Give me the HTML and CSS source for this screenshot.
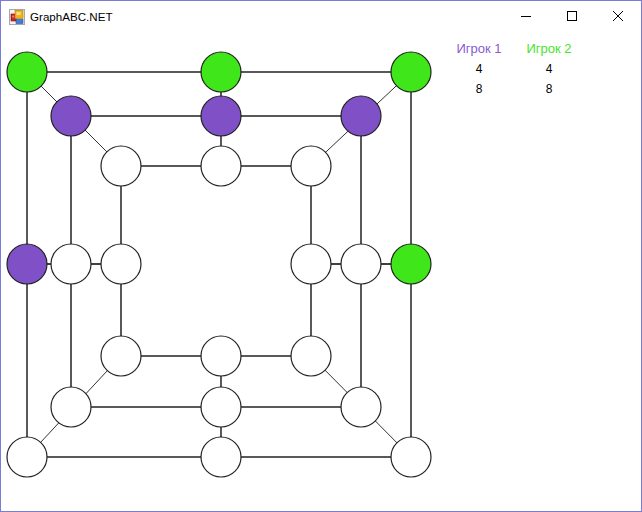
FILE: index.html
```html
<!DOCTYPE html>
<html lang="ru">
<head>
    <meta charset="UTF-8">
    <title>GraphABC.NET</title>
    <link rel="stylesheet" href="styles.css">
</head>
<body>
    <div class="window">
        <div class="titlebar">
            <svg class="app-icon" width="16" height="16" viewBox="0 0 16 16">
                <rect x="0.5" y="0.5" width="15" height="15" fill="#f4f4f4" stroke="#a8a8a8"/>
                <rect x="2" y="5" width="5" height="7" fill="#c8282a" stroke="#7a1010" stroke-width="0.6"/>
                <rect x="3.2" y="6.5" width="2" height="2" fill="#f08080"/>
                <rect x="6" y="1.5" width="8" height="8" fill="#f2b21a" stroke="#b07a08" stroke-width="0.6"/>
                <rect x="7.5" y="3" width="4" height="3" fill="#fbe08a"/>
                <rect x="7" y="10.5" width="7" height="4" fill="#3f7fd8" stroke="#2050a0" stroke-width="0.6"/>
            </svg>
            <span class="title">GraphABC.NET</span>
            <div class="controls">
                <div class="ctl">
                    <svg width="12" height="12" viewBox="0 0 12 12"><line x1="1" y1="6.5" x2="11" y2="6.5" stroke="#000" stroke-width="1"/></svg>
                </div>
                <div class="ctl">
                    <svg width="12" height="12" viewBox="0 0 12 12"><rect x="1.5" y="1.5" width="9" height="9" fill="none" stroke="#000" stroke-width="1"/></svg>
                </div>
                <div class="ctl">
                    <svg width="12" height="12" viewBox="0 0 12 12"><path d="M1 1 L11 11 M11 1 L1 11" stroke="#000" stroke-width="1"/></svg>
                </div>
            </div>
        </div>

        <div class="client">
            <svg class="board" width="440" height="480" viewBox="1 31 440 480">
                <g class="edges">
                    <!-- outer square -->
                    <rect x="27" y="72" width="384" height="385"/>
                    <!-- middle square -->
                    <rect x="71" y="116" width="290" height="291"/>
                    <!-- inner square -->
                    <rect x="121" y="166" width="190" height="190"/>
                    <!-- cross links -->
                    <line x1="221" y1="72" x2="221" y2="166"/>
                    <line x1="221" y1="356" x2="221" y2="457"/>
                    <line x1="27" y1="264" x2="121" y2="264"/>
                    <line x1="311" y1="264" x2="411" y2="264"/>
                </g>
                <g class="diag">
                    <line x1="27" y1="72" x2="121" y2="166"/>
                    <line x1="411" y1="72" x2="311" y2="166"/>
                    <line x1="411" y1="457" x2="311" y2="356"/>
                    <line x1="27" y1="457" x2="121" y2="356"/>
                </g>
                <g class="nodes">
                    <circle class="green" cx="27" cy="72" r="20"/>
                    <circle class="green" cx="221" cy="72" r="20"/>
                    <circle class="green" cx="411" cy="72" r="20"/>
                    <circle class="green" cx="411" cy="264" r="20"/>
                    <circle cx="411" cy="457" r="20"/>
                    <circle cx="221" cy="457" r="20"/>
                    <circle cx="27" cy="457" r="20"/>
                    <circle class="purple" cx="27" cy="264" r="20"/>

                    <circle class="purple" cx="71" cy="116" r="20"/>
                    <circle class="purple" cx="221" cy="116" r="20"/>
                    <circle class="purple" cx="361" cy="116" r="20"/>
                    <circle cx="361" cy="264" r="20"/>
                    <circle cx="361" cy="407" r="20"/>
                    <circle cx="221" cy="407" r="20"/>
                    <circle cx="71" cy="407" r="20"/>
                    <circle cx="71" cy="264" r="20"/>

                    <circle cx="121" cy="166" r="20"/>
                    <circle cx="221" cy="166" r="20"/>
                    <circle cx="311" cy="166" r="20"/>
                    <circle cx="311" cy="264" r="20"/>
                    <circle cx="311" cy="356" r="20"/>
                    <circle cx="221" cy="356" r="20"/>
                    <circle cx="121" cy="356" r="20"/>
                    <circle cx="121" cy="264" r="20"/>
                </g>
            </svg>

            <div class="scores">
                <div class="player">
                    <div class="name p1">Игрок 1</div>
                    <div class="num">4</div>
                    <div class="num">8</div>
                </div>
                <div class="player">
                    <div class="name p2">Игрок 2</div>
                    <div class="num">4</div>
                    <div class="num">8</div>
                </div>
            </div>
        </div>
    </div>
</body>
</html>
```

FILE: styles.css
```css
* {
    margin: 0;
    padding: 0;
    box-sizing: border-box;
}

body {
    font-family: "Liberation Sans", Arial, sans-serif;
    background: #fff;
}

.window {
    width: 642px;
    height: 512px;
    border: 1px solid #7b7bd8;
    background: #fff;
    display: flex;
    flex-direction: column;
}

.titlebar {
    height: 30px;
    display: flex;
    align-items: center;
    padding-left: 8px;
    flex-shrink: 0;
}

.app-icon {
    display: block;
    margin-top: 1px;
}

.title {
    margin-left: 5px;
    font-size: 11.6px;
    color: #000;
    margin-top: 1px;
}

.controls {
    margin-left: auto;
    display: flex;
    height: 30px;
}

.ctl {
    width: 46px;
    height: 30px;
    display: flex;
    align-items: center;
    justify-content: center;
}

.ctl svg {
    display: block;
    margin-top: -1px;
}

.client {
    display: flex;
    flex: 1;
}

.board {
    display: block;
    flex-shrink: 0;
}

.edges rect,
.edges line {
    fill: none;
    stroke: #000;
    stroke-width: 1.3;
}

.diag line {
    stroke: #333;
    stroke-width: 1;
}

.nodes circle {
    fill: #fff;
    stroke: #222;
    stroke-width: 1.2;
}

.nodes .green {
    fill: #3fe61a;
}

.nodes .purple {
    fill: #7f50c6;
}

.scores {
    display: flex;
    margin-left: 3px;
    padding-top: 8px;
}

.player {
    width: 70px;
    text-align: center;
}

.name {
    font-size: 13px;
    line-height: 20px;
}

.p1 {
    color: #8a5ad2;
}

.p2 {
    color: #48e42a;
}

.num {
    font-size: 12px;
    line-height: 20px;
    color: #000;
}
```
